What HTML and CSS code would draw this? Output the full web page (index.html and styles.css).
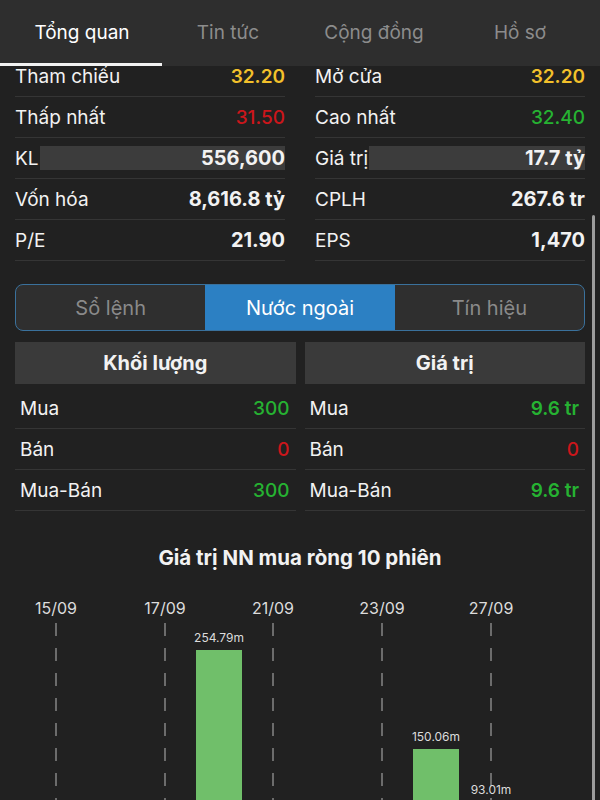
FILE: index.html
```html
<!DOCTYPE html>
<html lang="vi">
<head>
  <meta charset="UTF-8">
  <title>Tổng quan</title>
  <link rel="stylesheet" href="styles.css">
</head>
<body>
  <nav class="tabbar">
    <div class="tab active">Tổng quan</div>
    <div class="tab">Tin tức</div>
    <div class="tab">Cộng đồng</div>
    <div class="tab">Hồ sơ</div>
  </nav>

  <main class="content">
    <!-- price overview -->
    <section class="stats">
      <div class="row"><span class="label">Tham chiếu</span><span class="val ref">32.20</span></div>
      <div class="row"><span class="label">Mở cửa</span><span class="val ref">32.20</span></div>

      <div class="row"><span class="label">Thấp nhất</span><span class="val down">31.50</span></div>
      <div class="row"><span class="label">Cao nhất</span><span class="val up">32.40</span></div>

      <div class="row"><span class="label">KL</span><span class="vol-bar"><span class="val strong">556,600</span></span></div>
      <div class="row"><span class="label">Giá trị</span><span class="vol-bar"><span class="val strong">17.7 tỷ</span></span></div>

      <div class="row"><span class="label">Vốn hóa</span><span class="val strong">8,616.8 tỷ</span></div>
      <div class="row"><span class="label">CPLH</span><span class="val strong">267.6 tr</span></div>

      <div class="row"><span class="label">P/E</span><span class="val strong">21.90</span></div>
      <div class="row"><span class="label">EPS</span><span class="val strong">1,470</span></div>
    </section>

    <div class="segmented">
      <div class="seg">Sổ lệnh</div>
      <div class="seg active">Nước ngoài</div>
      <div class="seg">Tín hiệu</div>
    </div>

    <!-- foreign trading -->
    <section class="foreign">
      <div class="col">
        <div class="col-head">Khối lượng</div>
        <div class="frow"><span class="label">Mua</span><span class="val up">300</span></div>
        <div class="frow"><span class="label">Bán</span><span class="val down">0</span></div>
        <div class="frow"><span class="label">Mua-Bán</span><span class="val up">300</span></div>
      </div>
      <div class="col">
        <div class="col-head">Giá trị</div>
        <div class="frow"><span class="label">Mua</span><span class="val up semi">9.6 tr</span></div>
        <div class="frow"><span class="label">Bán</span><span class="val down">0</span></div>
        <div class="frow"><span class="label">Mua-Bán</span><span class="val up semi">9.6 tr</span></div>
      </div>
    </section>

    <h2 class="chart-title">Giá trị NN mua ròng 10 phiên</h2>

    <svg class="chart" width="600" height="320" viewBox="0 0 600 320">
      <g class="grid">
        <line x1="56" y1="43" x2="56" y2="320"/>
        <line x1="165" y1="43" x2="165" y2="320"/>
        <line x1="273" y1="43" x2="273" y2="320"/>
        <line x1="382" y1="43" x2="382" y2="320"/>
        <line x1="491" y1="43" x2="491" y2="320"/>
      </g>
      <g class="dates">
        <text x="56" y="34">15/09</text>
        <text x="165" y="34">17/09</text>
        <text x="273" y="34">21/09</text>
        <text x="382" y="34">23/09</text>
        <text x="491" y="34">27/09</text>
      </g>
      <g class="bars">
        <rect x="196" y="70" width="46" height="250"/>
        <rect x="413" y="169" width="46" height="151"/>
        <rect x="468" y="223" width="46" height="97"/>
      </g>
      <g class="bar-labels">
        <text x="219" y="62">254.79m</text>
        <text x="436" y="161">150.06m</text>
        <text x="491" y="214">93.01m</text>
      </g>
    </svg>
  </main>

  <div class="scroll-thumb"></div>
</body>
</html>
```

FILE: styles.css
```css
body {
  margin: 0;
  background-color: #212121;
  color: #f2f2f2;
  font-family: Inter, "Liberation Sans", Arial, sans-serif;
}

.tabbar {
  position: relative;
  z-index: 1;
  display: flex;
  height: 66px;
  padding: 0 7px 0 9px;
  background-color: #2e2e2e;
}

.tab {
  flex: 1;
  display: flex;
  align-items: center;
  justify-content: center;
  padding-bottom: 2px;
  font-size: 19px;
  color: #8c8c8c;
}

.tab.active {
  color: #fff;
}

.tab.active::after {
  content: "";
  position: absolute;
  left: 0;
  bottom: 0;
  width: 162px;
  height: 3px;
  background-color: #f2f2f2;
}

/* list is scrolled a little, first row sits under the tab bar */
.stats {
  display: grid;
  grid-template-columns: 1fr 1fr;
  column-gap: 30px;
  padding: 0 15px;
  margin-top: -10px;
}

.row {
  display: flex;
  align-items: center;
  height: 41px;
  box-sizing: border-box;
  border-bottom: 1px solid #353535;
  font-size: 19px;
}

.label {
  white-space: nowrap;
}

.val {
  margin-left: auto;
  font-weight: 500;
}

.val.strong {
  font-size: 20px;
  font-weight: 700;
}

.val.semi {
  font-weight: 600;
}

.val.ref {
  color: #f3c02b;
  font-weight: 600;
}

.val.down {
  color: #cc161b;
}

.val.up {
  color: #26b232;
}

.vol-bar {
  flex: 1;
  display: flex;
  align-items: center;
  height: 24px;
  margin-left: 1px;
  background-color: #3c3c3c;
}

.segmented {
  display: flex;
  height: 47px;
  margin: 23px 15px 0;
  border: 1.5px solid #3a719c;
  border-radius: 8px;
  overflow: hidden;
  background-color: #2f2f2f;
  box-sizing: border-box;
}

.seg {
  flex: 1;
  display: flex;
  align-items: center;
  justify-content: center;
  font-size: 20px;
  color: #8a8a8a;
}

.seg.active {
  background-color: #2c80c3;
  color: #fff;
}

.foreign {
  display: grid;
  grid-template-columns: 1fr 1fr;
  column-gap: 9px;
  padding: 0 15px;
  margin-top: 11px;
}

.col-head {
  display: flex;
  align-items: center;
  justify-content: center;
  height: 42px;
  margin-bottom: 4px;
  background-color: #3a3a3a;
  font-size: 20px;
  font-weight: 700;
}

.frow {
  display: flex;
  align-items: center;
  height: 41px;
  box-sizing: border-box;
  padding: 0 6px 0 5px;
  border-bottom: 1px solid #353535;
  font-size: 19px;
}

.chart-title {
  margin: 35px 0 0;
  line-height: 24px;
  text-align: center;
  font-size: 20.5px;
  font-weight: 700;
  color: #f2f2f2;
}

.chart {
  display: block;
  margin-top: 10px;
}

.chart .grid line {
  stroke: #6c6c6c;
  stroke-width: 2;
  stroke-dasharray: 13 12;
}

.chart .dates text {
  font-size: 16px;
  fill: #dcdcdc;
  text-anchor: middle;
}

.chart .bars rect {
  fill: #70bf6a;
}

.chart .bar-labels text {
  font-size: 12px;
  fill: #dcdcdc;
  text-anchor: middle;
}

.scroll-thumb {
  position: fixed;
  top: 215px;
  right: 5px;
  bottom: -10px;
  width: 3px;
  border-radius: 2px;
  background-color: #9c9c9c;
}
```
